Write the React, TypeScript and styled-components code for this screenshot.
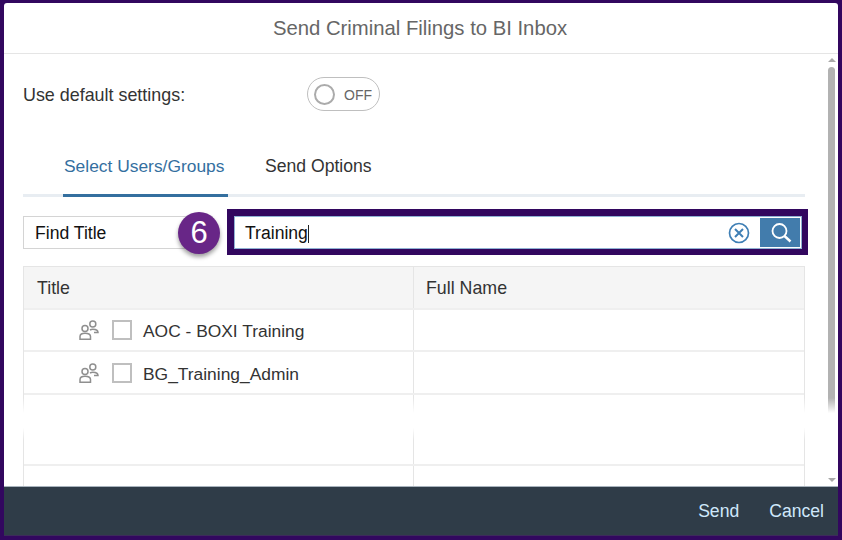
import React from "react";
import styled, { createGlobalStyle } from "styled-components";

const Global = createGlobalStyle`
  html, body { margin: 0; padding: 0; background: #32075f; }
  * { box-sizing: border-box; }
`;

const Page = styled.div`
  width: 842px;
  height: 540px;
  background: #32075f;
  padding: 3px 4px 4px 4px;
  font-family: "Liberation Sans", Arial, sans-serif;
  overflow: hidden;
`;

const Dialog = styled.div`
  position: relative;
  width: 834px;
  height: 533px;
  background: #fff;
  border-radius: 3px 3px 0 0;
  display: flex;
  flex-direction: column;
  overflow: hidden;
`;

const Header = styled.header`
  height: 51px;
  flex: none;
  display: flex;
  align-items: center;
  justify-content: center;
  padding-right: 2px;
  font-size: 20.3px;
  color: #666;
  border-bottom: 1px solid #e5e5e5;
`;

const Body = styled.div`
  flex: 1;
  min-height: 0;
  display: flex;
  overflow: hidden;
`;

const Content = styled.div`
  width: 821px;
  padding: 23px 20px 0 19px;
  flex: none;
  overflow: hidden;
`;

const SettingRow = styled.div`
  display: flex;
  align-items: center;
  height: 34px;
`;

const SettingLabel = styled.span`
  width: 284px;
  font-size: 17.9px;
  color: #333;
  margin-top: 3px;
`;

const Toggle = styled.div`
  width: 73px;
  height: 34px;
  border: 1px solid #bfbfbf;
  border-radius: 17px;
  display: flex;
  align-items: center;
  padding-left: 6px;
  gap: 9px;
  font-size: 14px;
  color: #666;
`;

const Knob = styled.span`
  width: 21px;
  height: 21px;
  border: 2px solid #ababab;
  border-radius: 50%;
`;

const ToggleText = styled.span`
  padding-top: 2px;
`;

const Tabs = styled.div`
  height: 53px;
  margin-top: 33px;
  display: flex;
  align-items: flex-end;
  border-bottom: 3px solid #e8edf2;
`;

const Tab = styled.div<{ $active?: boolean }>`
  height: 53px;
  margin-bottom: -3px;
  padding-top: 12px;
  font-size: ${(p) => (p.$active ? "17.4px" : "17.6px")};
  color: ${(p) => (p.$active ? "#346f9f" : "#333")};
  border-bottom: 3px solid ${(p) => (p.$active ? "#346f9f" : "transparent")};
  margin-left: ${(p) => (p.$active ? "40px" : "36px")};
  padding-left: 1px;
  width: ${(p) => (p.$active ? "165px" : "auto")};
`;

const SearchRow = styled.div`
  display: flex;
  align-items: center;
  margin-top: 12px;
  height: 46px;
  position: relative;
`;

const FindBox = styled.div`
  width: 190px;
  height: 33px;
  margin-top: 1px;
  border: 1px solid #d4d4d4;
  padding: 2px 0 0 11px;
  display: flex;
  align-items: center;
  font-size: 17.6px;
  color: #111;
  flex: none;
`;

const Badge = styled.div`
  position: absolute;
  left: 155px;
  top: 3px;
  width: 42px;
  height: 42px;
  border-radius: 50%;
  background: #682687;
  color: #fff;
  font-size: 31px;
  display: flex;
  align-items: center;
  justify-content: center;
  box-shadow: 0 3px 4px rgba(0, 0, 0, 0.38);
`;

const Highlight = styled.div`
  margin-left: 14px;
  width: 581px;
  height: 46px;
  flex: none;
  background: #32075f;
  padding: 7px 6px 6px 7px;
  display: flex;
`;

const Field = styled.div`
  flex: 1;
  display: flex;
  align-items: center;
  background: #fff;
  border: 1px solid #8fb2d3;
  outline: 1px solid #fff;
  outline-offset: -2px;
  height: 33px;
`;

const FieldText = styled.span`
  flex: 1;
  padding: 2px 0 0 10px;
  font-size: 17.6px;
  color: #111;
  display: flex;
  align-items: center;
`;

const Caret = styled.span`
  width: 1px;
  height: 18px;
  background: #222;
`;

const ClearIcon = styled.svg`
  width: 22px;
  height: 22px;
  margin-right: 10px;
  flex: none;
`;

const SearchButton = styled.div`
  width: 41px;
  height: 31px;
  background: #427cac;
  display: flex;
  align-items: center;
  justify-content: center;
  flex: none;
`;

const Table = styled.div`
  margin-top: 11px;
  width: 782px;
  height: 232px;
  border-left: 1px solid #e5e5e5;
  border-right: 1px solid #e5e5e5;
  border-top: 1px solid #e5e5e5;
`;

const Row = styled.div<{ $h: number; $head?: boolean }>`
  display: grid;
  grid-template-columns: 390px 1fr;
  height: ${(p) => p.$h}px;
  border-bottom: 2px solid #efefef;
  background: ${(p) => (p.$head ? "#f5f5f5" : "#fff")};
`;

const Cell = styled.div<{ $head?: boolean }>`
  display: flex;
  align-items: center;
  font-size: ${(p) => (p.$head ? "17.8px" : "17.4px")};
  padding-top: ${(p) => (p.$head ? "2px" : "0")};
  color: #333;
`;

const TitleCell = styled(Cell)`
  padding-left: ${(p) => (p.$head ? "13px" : "55px")};
  border-right: 1px solid #e5e5e5;
`;

const NameCell = styled(Cell)`
  padding-left: 12px;
`;

const RowLabel = styled.span`
  padding-top: 3px;
`;

const GroupIcon = styled.svg`
  width: 20px;
  height: 20px;
  flex: none;
  margin-right: 13px;
`;

const Check = styled.span`
  width: 20px;
  height: 20px;
  border: 2px solid #bfbfbf;
  flex: none;
  margin-right: 11px;
`;

const ScrollColumn = styled.div`
  flex: 1;
  position: relative;
`;

const Arrow = styled.span<{ $down?: boolean }>`
  position: absolute;
  left: 3px;
  top: ${(p) => (p.$down ? "424px" : "4px")};
  width: 0;
  height: 0;
  border-left: 4px solid transparent;
  border-right: 4px solid transparent;
  ${(p) =>
    p.$down ? "border-top: 4px solid #a9a9a9;" : "border-bottom: 4px solid #a9a9a9;"}
`;

const Thumb = styled.div`
  position: absolute;
  left: 3px;
  top: 13px;
  width: 7px;
  height: 358px;
  border-radius: 4px 4px 0 0;
  background: #b2b2b2;
`;

const Fade = styled.div`
  position: absolute;
  left: 0;
  right: 0;
  top: 395px;
  height: 42px;
  pointer-events: none;
  background: linear-gradient(
    to bottom,
    rgba(255, 255, 255, 0) 0,
    #fff 36%,
    #fff 70%,
    rgba(255, 255, 255, 0) 100%
  );
`;

const Footer = styled.footer`
  height: 50px;
  flex: none;
  background: #2f3c48;
  border-top: 1px solid #a8b3bd;
  border-bottom: 1px solid #3d2a5c;
  display: flex;
  align-items: center;
  justify-content: flex-end;
  padding: 1px 14px 0 0;
  gap: 30px;
`;

const FooterButton = styled.button`
  border: 0;
  padding: 0;
  background: none;
  font: inherit;
  font-size: 17.6px;
  color: #cfe8fb;
`;

const GroupGlyph = () => (
  <GroupIcon viewBox="0 0 20 20" fill="none" stroke="#8f8f8f" strokeWidth="1.5">
    <circle cx="6" cy="8.500" r="3" />
    <path d="M1 19.200v-2.700C1 14.200 3 13.200 6 13.200s5.500 1 5.500 3.300v2.700z" />
    <circle cx="13.800" cy="4" r="3" />
    <path d="M11 10c.8-.5 1.700-.8 2.800-.8 3 0 5.200 1.100 5.200 3.400h-4" />
  </GroupIcon>
);

export default function App() {
  return (
    <Page>
      <Global />
      <Dialog>
        <Header>Send Criminal Filings to BI Inbox</Header>
        <Body>
          <Content>
            <SettingRow>
              <SettingLabel>Use default settings:</SettingLabel>
              <Toggle>
                <Knob />
                <ToggleText>OFF</ToggleText>
              </Toggle>
            </SettingRow>
            <Tabs>
              <Tab $active>Select Users/Groups</Tab>
              <Tab>Send Options</Tab>
            </Tabs>
            <SearchRow>
              <FindBox>Find Title</FindBox>
              <Badge>6</Badge>
              <Highlight>
                <Field>
                  <FieldText>
                    Training
                    <Caret />
                  </FieldText>
                  <ClearIcon viewBox="0 0 22 22" fill="none" stroke="#3f7fb5" strokeWidth="1.700">
                    <circle cx="11" cy="11" r="9.500" />
                    <path d="M7 7l8 8M15 7l-8 8" strokeWidth="2" />
                  </ClearIcon>
                  <SearchButton>
                    <svg width="22" height="22" viewBox="0 0 22 22" fill="none" stroke="#fff" strokeWidth="1.800">
                      <circle cx="9.500" cy="9" r="7" />
                      <path d="M14.500 14l6 5.500" strokeWidth="2.400" />
                    </svg>
                  </SearchButton>
                </Field>
              </Highlight>
            </SearchRow>
            <Table>
              <Row $h={43} $head>
                <TitleCell $head>Title</TitleCell>
                <NameCell $head>Full Name</NameCell>
              </Row>
              <Row $h={42}>
                <TitleCell>
                  <GroupGlyph />
                  <Check />
                  <RowLabel>AOC - BOXI Training</RowLabel>
                </TitleCell>
                <NameCell />
              </Row>
              <Row $h={43}>
                <TitleCell>
                  <GroupGlyph />
                  <Check />
                  <RowLabel>BG_Training_Admin</RowLabel>
                </TitleCell>
                <NameCell />
              </Row>
              <Row $h={71}>
                <TitleCell />
                <NameCell />
              </Row>
              <Row $h={32}>
                <TitleCell />
                <NameCell />
              </Row>
            </Table>
          </Content>
          <ScrollColumn>
            <Arrow />
            <Thumb />
            <Arrow $down />
          </ScrollColumn>
          <Fade />
        </Body>
        <Footer>
          <FooterButton>Send</FooterButton>
          <FooterButton>Cancel</FooterButton>
        </Footer>
      </Dialog>
    </Page>
  );
}
